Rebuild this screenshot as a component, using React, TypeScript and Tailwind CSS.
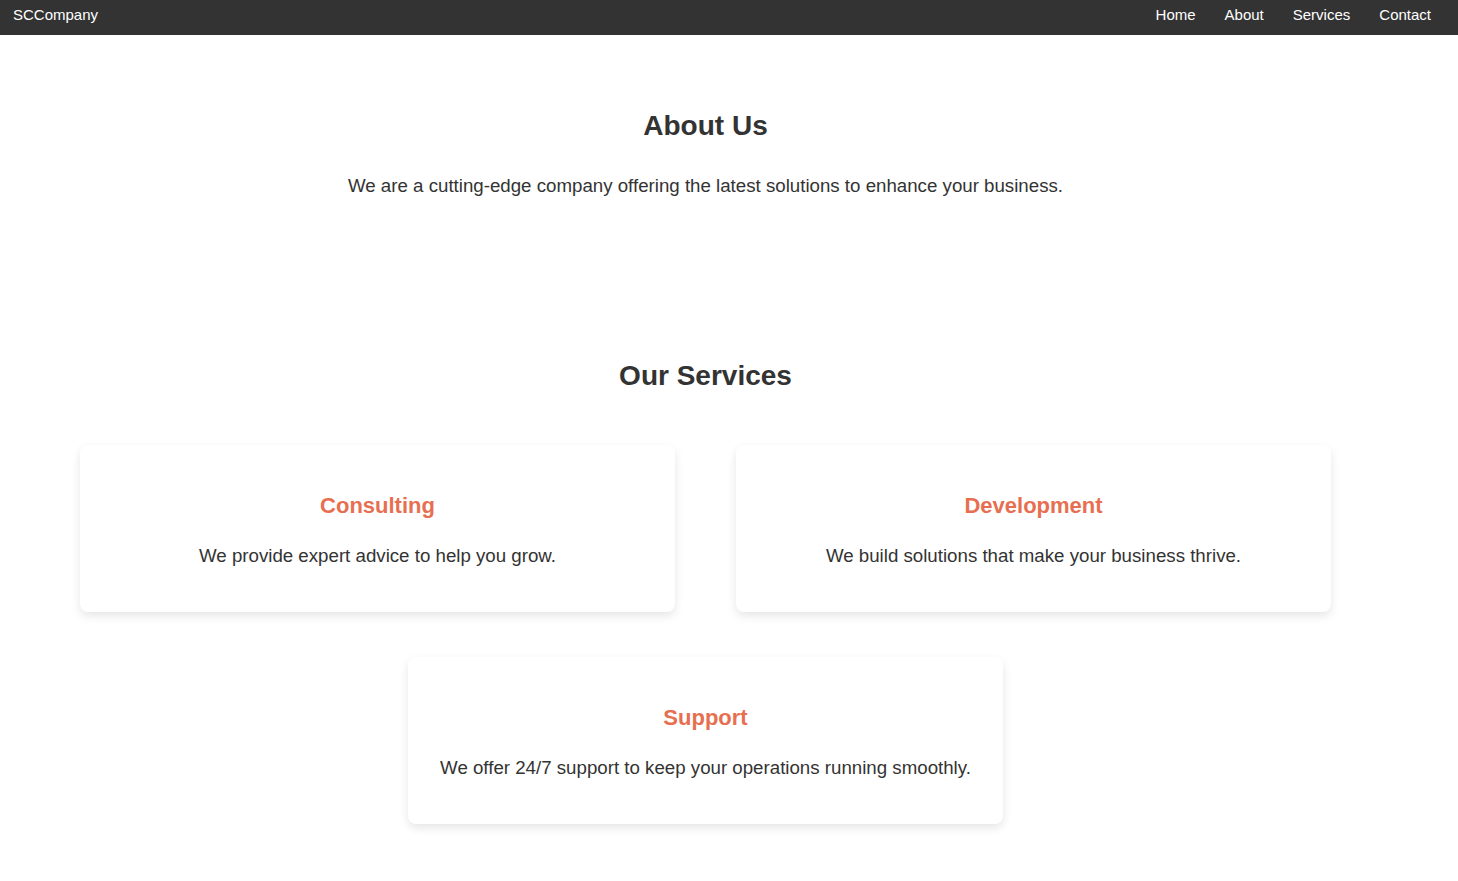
const services = [
  {
    title: "Consulting",
    text: "We provide expert advice to help you grow.",
  },
  {
    title: "Development",
    text: "We build solutions that make your business thrive.",
  },
  {
    title: "Support",
    text: "We offer 24/7 support to keep your operations running smoothly.",
  },
];

const links = ["Home", "About", "Services", "Contact"];

export default function App() {
  return (
    <div className="min-h-screen bg-white text-[#333] font-['Liberation_Sans',Arial,sans-serif]">
      <nav className="flex h-[35px] items-center justify-between bg-[#333] pb-[4px] pl-[13px] pr-[27px] text-[15px] text-white">
        <span>SCCompany</span>
        <ul className="flex gap-[29px]">
          {links.map((link) => (
            <li key={link}>
              <a href="#">{link}</a>
            </li>
          ))}
        </ul>
      </nav>

      <main className="w-[1411px]">
        <section className="flex flex-col items-center pt-[75px]">
          <h2 className="text-[28px] font-bold leading-[32px]">About Us</h2>
          <p className="mt-[33px] text-[18.7px] leading-[22px]">
            We are a cutting-edge company offering the latest solutions to
            enhance your business.
          </p>
        </section>

        <section className="flex flex-col items-center pt-[163px] pb-[56px]">
          <h2 className="text-[28px] font-bold leading-[32px]">
            Our Services
          </h2>
          <div className="mt-[53px] flex flex-wrap justify-center gap-x-[61px] gap-y-[45px] px-[80px]">
            {services.map((service) => (
              <div
                key={service.title}
                className="flex w-[595px] flex-col items-center rounded-lg bg-white pt-[48px] pb-[45px] text-center shadow-[0_4px_10px_rgba(0,0,0,0.1)]"
              >
                <h3 className="text-[22px] font-bold leading-[25px] text-[#e76f51]">
                  {service.title}
                </h3>
                <p className="mt-[27px] text-[18.7px] leading-[22px]">
                  {service.text}
                </p>
              </div>
            ))}
          </div>
        </section>
      </main>
    </div>
  );
}
